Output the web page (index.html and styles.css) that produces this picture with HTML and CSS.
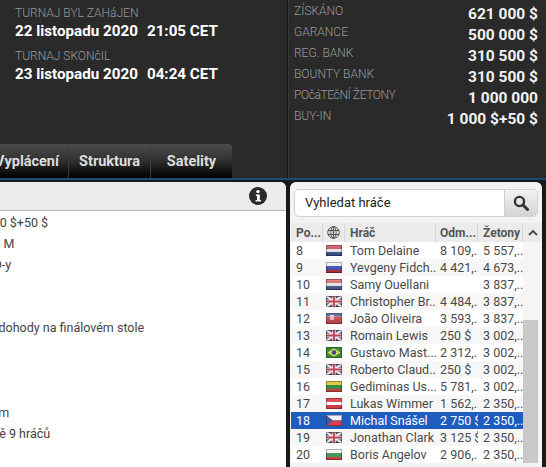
FILE: index.html
```html
<!DOCTYPE html>
<html lang="en">

<head>
    <meta charset="UTF-8">
    <title>Turnaj</title>
    <link rel="stylesheet" href="styles.css">
</head>

<body>
    <svg class="flag-defs" width="0" height="0">
        <defs>
            <linearGradient id="gloss" x1="0" y1="0" x2="0" y2="1">
                <stop offset="0" stop-color="#fff" stop-opacity="0.25"/>
                <stop offset="1" stop-color="#000" stop-opacity="0.2"/>
            </linearGradient>
            <symbol id="flag-nl" viewBox="0 0 16 11">
                <rect width="16" height="11" fill="#fff"/><rect width="16" height="4" fill="#d0485a"/><rect y="7" width="16" height="4" fill="#3a5a9a"/>
                <rect width="16" height="11" fill="url(#gloss)"/>
            </symbol>
            <symbol id="flag-ru" viewBox="0 0 16 11">
                <rect width="16" height="11" fill="#fff"/><rect y="4" width="16" height="4" fill="#3a4fc0"/><rect y="8" width="16" height="3" fill="#d03040"/>
                <rect width="16" height="11" fill="url(#gloss)"/>
            </symbol>
            <symbol id="flag-fr" viewBox="0 0 16 11">
                <rect width="16" height="11" fill="#fff"/><rect width="16" height="4" fill="#e06070"/><rect y="7" width="16" height="4" fill="#4a629a"/>
                <rect width="16" height="11" fill="url(#gloss)"/>
            </symbol>
            <symbol id="flag-gb" viewBox="0 0 16 11">
                <rect width="16" height="11" fill="#66607e"/>
                <path d="M0 0L16 11M16 0L0 11" stroke="#f0e4e8" stroke-width="2.2"/>
                <path d="M8 0V11M0 5.5H16" stroke="#f4e8ec" stroke-width="3.4"/>
                <path d="M8 0V11M0 5.5H16" stroke="#b84858" stroke-width="1.8"/>
            </symbol>
            <symbol id="flag-pt" viewBox="0 0 16 11">
                <rect width="16" height="11" fill="#fff"/><rect width="16" height="3.5" fill="#3a5a9a"/><rect y="3.5" width="16" height="7.5" fill="#d84a50"/>
                <rect x="4" y="2" width="4" height="5" fill="#f4d0d0"/>
                <rect width="16" height="11" fill="url(#gloss)"/>
            </symbol>
            <symbol id="flag-br" viewBox="0 0 16 11">
                <rect width="16" height="11" fill="#3a8a3a"/><path d="M8 1.2L14.5 5.5L8 9.8L1.5 5.5Z" fill="#d8d860"/><circle cx="8" cy="5.5" r="2.3" fill="#344a8a"/>
            </symbol>
            <symbol id="flag-lt" viewBox="0 0 16 11">
                <rect width="16" height="4" fill="#e0c840"/><rect y="4" width="16" height="4" fill="#3a8a4a"/><rect y="8" width="16" height="3" fill="#c04040"/>
            </symbol>
            <symbol id="flag-at" viewBox="0 0 16 11">
                <rect width="16" height="11" fill="#fff"/><rect width="16" height="4" fill="#e05058"/><rect y="7" width="16" height="4" fill="#d03a44"/>
            </symbol>
            <symbol id="flag-cz" viewBox="0 0 16 11">
                <rect width="16" height="5.5" fill="#f2f2f6"/><rect y="5.5" width="16" height="5.5" fill="#d84050"/><path d="M0 0L7 5.5L0 11Z" fill="#3a5aa8"/>
            </symbol>
            <symbol id="flag-bg" viewBox="0 0 16 11">
                <rect width="16" height="4" fill="#f4f4f4"/><rect y="4" width="16" height="4" fill="#3f9a60"/><rect y="8" width="16" height="3" fill="#c84040"/>
            </symbol>
        </defs>
    </svg>

    <div class="page">
        <div class="top">
            <div class="top-left">
                <div class="dates">
                    <div class="date-label">TURNAJ BYL ZAHáJEN</div>
                    <div class="date-value"><span class="date-day">22 listopadu 2020</span>21:05 CET</div>
                    <div class="date-label">TURNAJ SKONčIL</div>
                    <div class="date-value"><span class="date-day">23 listopadu 2020</span>04:24 CET</div>
                </div>
                <div class="tabs">
                    <div class="tab tab-first">Vyplácení</div>
                    <div class="tab">Struktura</div>
                    <div class="tab tab-last">Satelity</div>
                </div>
            </div>
            <div class="top-right">
                <div class="stat"><span class="stat-label">ZÍSKÁNO</span><span class="stat-value">621 000 $</span></div>
                <div class="stat"><span class="stat-label">GARANCE</span><span class="stat-value">500 000 $</span></div>
                <div class="stat"><span class="stat-label">REG. BANK</span><span class="stat-value">310 500 $</span></div>
                <div class="stat"><span class="stat-label">BOUNTY BANK</span><span class="stat-value">310 500 $</span></div>
                <div class="stat"><span class="stat-label stat-label-tight">POčáTEčNÍ ŽETONY</span><span class="stat-value">1 000 000</span></div>
                <div class="stat"><span class="stat-label">BUY-IN</span><span class="stat-value">1 000 $+50 $</span></div>
            </div>
        </div>

        <div class="bottom">
            <div class="info-panel">
                <div class="info-header">
                    <svg class="info-icon" width="18" height="18" viewBox="0 0 18 18">
                        <circle cx="9" cy="9" r="9" fill="#2b2b2b"/>
                        <circle cx="9" cy="4.6" r="1.7" fill="#fff"/>
                        <path d="M6.8 7.4H10.8V13H12V14.6H6.6V13H8V9H6.8Z" fill="#fff"/>
                    </svg>
                </div>
                <div class="info-body">
                    <div class="info-line">Vstupní: 1 000 $+50 $</div>
                    <div class="info-line">Startovních 1 M</div>
                    <div class="info-line">Druhy hry: KO-y</div>
                    <div class="info-line line-gap-1">Bez sázek, a dohody na finálovém stole</div>
                    <div class="info-line line-gap-2">Hra s časovým</div>
                    <div class="info-line">Až maximálně 9 hráčů</div>
                </div>
            </div>

            <div class="players">
                <div class="search">
                    <div class="search-text">Vyhledat hráče</div>
                    <div class="search-btn">
                        <svg width="16" height="16" viewBox="0 0 16 16">
                            <circle cx="6.5" cy="6.5" r="4.6" fill="none" stroke="#333" stroke-width="2.4"/>
                            <path d="M10 10L14.5 14.5" stroke="#333" stroke-width="3" stroke-linecap="round"/>
                        </svg>
                    </div>
                </div>
                <div class="table-wrap">
                    <div class="table-main">
                        <div class="row head">
                            <div class="c-pos">Po...</div>
                            <div class="c-flag">
                                <svg width="13" height="13" viewBox="0 0 13 13" fill="none" stroke="#555" stroke-width="1">
                                    <circle cx="6.5" cy="6.5" r="5.8" fill="#ddd"/>
                                    <ellipse cx="6.5" cy="6.5" rx="2.6" ry="5.8"/>
                                    <path d="M1 4.5H12M1 8.5H12M6.5 .7V12.3"/>
                                </svg>
                            </div>
                            <div class="c-name">Hráč</div>
                            <div class="c-prize">Odm...</div>
                            <div class="c-chips">Žetony</div>
                        </div>
                        <div class="row"><div class="c-pos">8</div><div class="c-flag"><svg class="flag"><use href="#flag-nl"/></svg></div><div class="c-name">Tom Delaine</div><div class="c-prize">8 109,..</div><div class="c-chips">5 557,..</div></div>
                        <div class="row alt"><div class="c-pos">9</div><div class="c-flag"><svg class="flag"><use href="#flag-ru"/></svg></div><div class="c-name">Yevgeny Fidch..</div><div class="c-prize">4 421,..</div><div class="c-chips">4 673,..</div></div>
                        <div class="row"><div class="c-pos">10</div><div class="c-flag"><svg class="flag"><use href="#flag-fr"/></svg></div><div class="c-name">Samy Ouellani</div><div class="c-prize"></div><div class="c-chips">3 837,..</div></div>
                        <div class="row alt"><div class="c-pos">11</div><div class="c-flag"><svg class="flag"><use href="#flag-gb"/></svg></div><div class="c-name">Christopher Br...</div><div class="c-prize">4 484,..</div><div class="c-chips">3 837,..</div></div>
                        <div class="row"><div class="c-pos">12</div><div class="c-flag"><svg class="flag"><use href="#flag-pt"/></svg></div><div class="c-name">João Oliveira</div><div class="c-prize">3 593,..</div><div class="c-chips">3 837,..</div></div>
                        <div class="row alt"><div class="c-pos">13</div><div class="c-flag"><svg class="flag"><use href="#flag-gb"/></svg></div><div class="c-name">Romain Lewis</div><div class="c-prize">250 $</div><div class="c-chips">3 002,..</div></div>
                        <div class="row"><div class="c-pos">14</div><div class="c-flag"><svg class="flag"><use href="#flag-br"/></svg></div><div class="c-name">Gustavo Mast...</div><div class="c-prize">2 312,..</div><div class="c-chips">3 002,..</div></div>
                        <div class="row alt"><div class="c-pos">15</div><div class="c-flag"><svg class="flag"><use href="#flag-gb"/></svg></div><div class="c-name">Roberto Claud..</div><div class="c-prize">250 $</div><div class="c-chips">3 002,..</div></div>
                        <div class="row"><div class="c-pos">16</div><div class="c-flag"><svg class="flag"><use href="#flag-lt"/></svg></div><div class="c-name">Gediminas Us...</div><div class="c-prize">5 781,..</div><div class="c-chips">3 002,..</div></div>
                        <div class="row alt"><div class="c-pos">17</div><div class="c-flag"><svg class="flag"><use href="#flag-at"/></svg></div><div class="c-name">Lukas Wimmer</div><div class="c-prize">1 562,..</div><div class="c-chips">2 350,..</div></div>
                        <div class="row selected"><div class="c-pos">18</div><div class="c-flag"><svg class="flag"><use href="#flag-cz"/></svg></div><div class="c-name">Michal Snášel</div><div class="c-prize">2 750 $</div><div class="c-chips">2 350,..</div></div>
                        <div class="row alt"><div class="c-pos">19</div><div class="c-flag"><svg class="flag"><use href="#flag-gb"/></svg></div><div class="c-name">Jonathan Clark</div><div class="c-prize">3 125 $</div><div class="c-chips">2 350,..</div></div>
                        <div class="row"><div class="c-pos">20</div><div class="c-flag"><svg class="flag"><use href="#flag-bg"/></svg></div><div class="c-name">Boris Angelov</div><div class="c-prize">2 906,..</div><div class="c-chips">2 350,..</div></div>
                    </div>
                    <div class="scrollbar">
                        <div class="scroll-head">
                            <svg width="10" height="7" viewBox="0 0 10 7"><path d="M1 6L5 2L9 6" fill="none" stroke="#444" stroke-width="1.8"/></svg>
                        </div>
                        <div class="scroll-track"><div class="scroll-thumb"></div></div>
                    </div>
                </div>
            </div>
        </div>
    </div>
</body>

</html>
```

FILE: styles.css
```css
* {
    margin: 0;
    padding: 0;
    box-sizing: border-box;
}
html, body {
    height: 100%;
    overflow: hidden;
}
body {
    background-color: #191919;
    font-family: Roboto, "Liberation Sans", sans-serif;
}
.flag-defs {
    display: block;
    height: 0;
}
.page {
    width: 621px;
    height: 467px;
    margin-left: -75px;
}
.top {
    display: flex;
    height: 178px;
    background-color: #2a2a2a;
}
.top-left {
    width: 363px;
    padding-left: 90px;
    border-right: 1px solid #151515;
    display: flex;
    flex-direction: column;
}
.dates {
    height: 144px;
    padding-top: 6px;
}
.date-label {
    font-size: 12px;
    font-weight: 300;
    line-height: 14px;
    color: #9a9a9a;
}
.date-value {
    font-size: 15.2px;
    line-height: 22px;
    font-weight: 700;
    color: #fff;
    margin-bottom: 7px;
}
.date-day {
    margin-right: 9px;
}
.tabs {
    display: flex;
    height: 34px;
    margin-left: -90px;
    padding-right: 55px;
    justify-content: flex-end;
}
.tab {
    width: 82px;
    border-right: 1px solid #3c3c3c;
    background: linear-gradient(#4c4c4c, #333 45%, #000);
    color: #ddd;
    font-size: 14.5px;
    font-weight: 700;
    text-align: center;
    line-height: 35px;
}
.tab-first {
    width: 95px;
    padding-left: 12px;
}
.tab-last {
    width: 81px;
    border-right: none;
    border-radius: 0 4px 0 0;
}
.top-right {
    flex: 1;
    padding: 3px 8px 0 5px;
    border-left: 1px solid #383838;
}
.stat {
    display: flex;
    justify-content: space-between;
    height: 21px;
}
.stat-label {
    font-size: 12px;
    font-weight: 300;
    line-height: 17px;
    color: #9a9a9a;
}
.stat-label-tight {
    letter-spacing: -0.4px;
}
.stat-value {
    font-size: 15.5px;
    line-height: 22px;
    font-weight: 700;
    color: #f2f2f2;
}
.bottom {
    display: flex;
    height: 289px;
    border-top: 2px solid #1e4a78;
    padding-top: 2px;
}
.info-panel {
    width: 361px;
    background-color: #fff;
    border-radius: 0 6px 0 0;
}
.info-header {
    display: flex;
    justify-content: flex-end;
    align-items: center;
    height: 29px;
    padding-right: 19px;
    background-color: #ebebeb;
    border-bottom: 1px solid #b5b5b5;
    border-radius: 0 6px 0 0;
}
.info-body {
    padding: 1px 0 0 2px;
    font-size: 12.5px;
    color: #444;
    white-space: nowrap;
}
.info-line {
    height: 21px;
    line-height: 21px;
}
.line-gap-1 {
    margin-top: 42px;
}
.line-gap-2 {
    margin-top: 64px;
}
.players {
    width: 252px;
    margin-left: 4px;
    padding: 7px 0 0 1px;
    background-color: #f3f3f3;
    border-radius: 6px 6px 0 0;
}
.search {
    display: flex;
    height: 28px;
    margin: 0 4px 0 3px;
    background-color: #fff;
    border: 1px solid #d2d2d2;
    border-radius: 5px;
}
.search-text {
    flex: 1;
    padding-left: 10px;
    font-size: 13px;
    line-height: 25px;
    color: #222;
}
.search-btn {
    display: flex;
    align-items: center;
    justify-content: center;
    width: 33px;
    background: linear-gradient(#f2f2f2, #d4d4d4);
    border-left: 1px solid #cfcfcf;
    border-radius: 0 4px 4px 0;
}
.table-wrap {
    display: flex;
    margin-top: 6px;
}
.table-main {
    width: 232px;
}
.row {
    display: flex;
    height: 17px;
    background-color: #fff;
    font-size: 12.5px;
    line-height: 17px;
    color: #4a4a4a;
    white-space: nowrap;
}
.row.alt {
    background-color: #f7f7f7;
}
.row.head {
    height: 19px;
    background-color: #ebebeb;
    font-size: 12px;
    font-weight: 700;
    line-height: 20px;
    color: #555;
}
.row.head > div {
    border-right: 1px solid #d6d6d6;
}
.row.selected {
    background-color: #1f5cc0;
    color: #fff;
}
.c-pos {
    width: 32px;
    padding-left: 5px;
}
.c-flag {
    display: flex;
    width: 22px;
    align-items: center;
    justify-content: center;
}
.c-name {
    width: 91px;
    overflow: hidden;
    padding-left: 5px;
}
.c-prize {
    width: 42px;
    overflow: hidden;
    padding-left: 4px;
}
.c-chips {
    width: 45px;
    overflow: hidden;
    padding-left: 5px;
}
.flag {
    display: block;
    width: 16px;
    height: 11px;
    outline: 1px solid rgba(0, 0, 0, 0.3);
    outline-offset: -1px;
}
.scrollbar {
    width: 19px;
    display: flex;
    flex-direction: column;
}
.scroll-head {
    display: flex;
    align-items: center;
    justify-content: center;
    height: 19px;
    background-color: #ebebeb;
}
.scroll-track {
    height: 222px;
    padding-top: 78px;
    background-color: #f5f5f5;
}
.scroll-thumb {
    width: 15px;
    height: 143px;
    background-color: #c9c9c9;
}
```
